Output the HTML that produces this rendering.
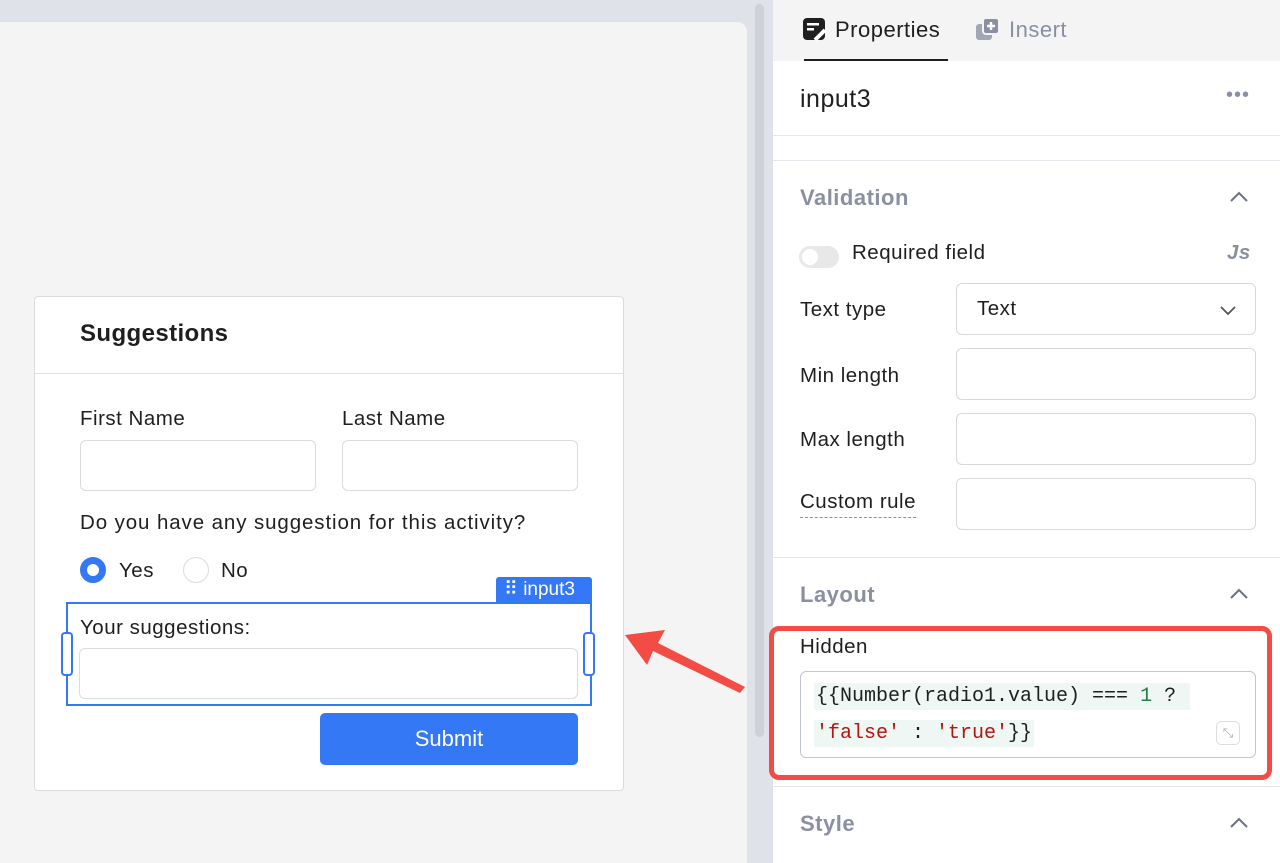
<!DOCTYPE html>
<html><head><meta charset="utf-8"><style>
*{box-sizing:border-box;margin:0;padding:0}
body{width:1280px;height:863px;overflow:hidden;background:#dfe2e9;font-family:"Liberation Sans",sans-serif;color:#1f1f1f;position:relative}
.abs{position:absolute}
.canvas{left:0;top:22px;width:747px;height:841px;background:#f4f4f4;border-top-right-radius:10px}
.thumb{left:755px;top:4px;width:9px;height:733px;background:#ced1d9;border-radius:5px}
.panel{left:773px;top:0;width:507px;height:863px;background:#fff}
.tabs{left:0;top:0;width:507px;height:61px;background:#f4f4f4}
.card{left:34px;top:296px;width:590px;height:495px;background:#fff;border:1px solid #dcdcdc;border-radius:4px}
.inp{background:#fff;border:1px solid #dcdcdc;border-radius:6px;position:absolute}
.t{position:absolute;font-size:20.5px;letter-spacing:0.5px;white-space:nowrap}
.gray{color:#8a8fa3}
.hr{position:absolute;left:0;width:507px;height:1px;background:#e4e6ec}
.pinp{position:absolute;left:183px;width:300px;height:52px;border:1px solid #d8d8d8;border-radius:6px;background:#fff}
.mono{font-family:"Liberation Mono",monospace;font-size:20px;letter-spacing:0}
</style></head><body>
<div class="abs canvas"></div>
<div class="abs thumb"></div>

<div class="abs card">
  <div class="t" style="left:45px;top:23px;font-size:24px;font-weight:bold;letter-spacing:0.4px">Suggestions</div>
  <div class="abs" style="left:0;top:76px;width:588px;height:1px;background:#e0e0e0"></div>
  <div class="t" style="left:45px;top:110px">First Name</div>
  <div class="t" style="left:307px;top:110px">Last Name</div>
  <div class="inp" style="left:45px;top:143px;width:236px;height:51px"></div>
  <div class="inp" style="left:307px;top:143px;width:236px;height:51px"></div>
  <div class="t" style="left:45px;top:214px;letter-spacing:0.9px">Do you have any suggestion for this activity?</div>
  <div class="abs" style="left:45px;top:260px;width:26px;height:26px;border-radius:50%;border:7px solid #3478f6"></div>
  <div class="t" style="left:84px;top:262px">Yes</div>
  <div class="abs" style="left:148px;top:260px;width:26px;height:26px;border-radius:50%;border:1px solid #dcdcdc"></div>
  <div class="t" style="left:186px;top:262px">No</div>
</div>
<!-- selected input3 -->
<div class="abs" style="left:496px;top:577px;width:96px;height:26px;background:#3478f6;border-radius:3px 3px 0 0;color:#fff;font-size:19px;padding:1px 0 0 8px">⠿ input3</div>
<div class="abs" style="left:66px;top:602px;width:526px;height:104px;border:2px solid #3478f6"></div>
<div class="t" style="left:80px;top:616px">Your suggestions:</div>
<div class="inp" style="left:79px;top:648px;width:499px;height:51px"></div>
<div class="abs" style="left:61px;top:632px;width:12px;height:44px;border:2px solid #3478f6;border-radius:4px;background:#fff"></div>
<div class="abs" style="left:583px;top:632px;width:12px;height:44px;border:2px solid #3478f6;border-radius:4px;background:#fff"></div>
<div class="abs" style="left:320px;top:713px;width:258px;height:52px;background:#3478f6;border-radius:5px;color:#fff;font-size:22px;text-align:center;line-height:52px">Submit</div>
<!-- arrow -->
<svg class="abs" style="left:620px;top:625px" width="130" height="70"><polygon points="5,10 45,5 38,18 125,62 120,68 33,26 27,40" fill="#f24c45"/></svg>

<div class="abs panel">
  <div class="abs tabs"></div>
  <svg class="abs" style="left:30px;top:18px" width="24" height="24"><rect x="0" y="0" width="22" height="22" rx="4" fill="#1f1f1f"/><rect x="4" y="5" width="12" height="2.5" fill="#fff"/><rect x="4" y="10" width="7" height="2.5" fill="#fff"/><path d="M12 22 L22 12" stroke="#fff" stroke-width="4"/></svg>
  <div class="t" style="left:62px;top:17px;font-size:22px">Properties</div>
  <div class="abs" style="left:31px;top:59px;width:144px;height:2px;background:#1f1f1f"></div>
  <svg class="abs" style="left:203px;top:18px" width="26" height="24"><rect x="0" y="6" width="16" height="16" rx="3" fill="#a2a6b5"/><rect x="7" y="0" width="16" height="16" rx="3" fill="#8a8fa3" stroke="#f4f4f4" stroke-width="2"/><path d="M15 4v8M11 8h8" stroke="#fff" stroke-width="2.5"/></svg>
  <div class="t gray" style="left:236px;top:17px;font-size:22px">Insert</div>
  <div class="t" style="left:27px;top:85px;font-size:25px">input3</div>
  <div class="t" style="left:453px;top:84px;font-size:20px;color:#8a8fa3;letter-spacing:1px">•••</div>
  <div class="hr" style="top:135px"></div>
  <div class="hr" style="top:160px"></div>
  <div class="t gray" style="left:27px;top:185px;font-size:22px;font-weight:bold">Validation</div>
  <svg class="abs" style="left:456px;top:190px" width="20" height="14"><path d="M2 11L10 3L18 11" stroke="#6c7084" stroke-width="2" fill="none"/></svg>
  <div class="abs" style="left:26px;top:246px;width:40px;height:22px;border-radius:11px;background:#e8e8e8"><div style="margin:3px;width:16px;height:16px;border-radius:50%;background:#fff"></div></div>
  <div class="t" style="left:79px;top:241px">Required field</div>
  <div class="t" style="left:454px;top:241px;font-weight:bold;font-style:italic;color:#8a8fa3">Js</div>
  <div class="t" style="left:27px;top:298px">Text type</div>
  <div class="pinp" style="top:283px"></div>
  <div class="t" style="left:204px;top:297px">Text</div>
  <svg class="abs" style="left:446px;top:304px" width="18" height="12"><path d="M2 3L9 10L16 3" stroke="#555" stroke-width="1.8" fill="none"/></svg>
  <div class="t" style="left:27px;top:364px">Min length</div>
  <div class="pinp" style="top:348px"></div>
  <div class="t" style="left:27px;top:428px">Max length</div>
  <div class="pinp" style="top:413px"></div>
  <div class="t" style="left:27px;top:490px;border-bottom:1px dashed #8a8fa3;padding-bottom:3px">Custom rule</div>
  <div class="pinp" style="top:478px"></div>
  <div class="hr" style="top:557px"></div>
  <div class="t gray" style="left:27px;top:582px;font-size:22px;font-weight:bold">Layout</div>
  <svg class="abs" style="left:456px;top:587px" width="20" height="14"><path d="M2 11L10 3L18 11" stroke="#6c7084" stroke-width="2" fill="none"/></svg>
  <div class="t" style="left:27px;top:635px">Hidden</div>
  <div class="abs" style="left:27px;top:671px;width:456px;height:87px;border:1px solid #c4c6cf;border-radius:6px"></div>
  <div class="abs mono" style="left:41px;top:683px;background:#eef7f3;padding:2px 2px;white-space:pre">{{Number(radio1.value) === <span style="color:#2a7a4b">1</span> ? </div>
  <div class="abs mono" style="left:41px;top:720px;background:#eef7f3;padding:2px 2px;white-space:pre"><span style="color:#b3150f">'false'</span> : <span style="color:#b3150f">'true'</span>}}</div>
  <div class="abs" style="left:443px;top:721px;width:24px;height:24px;border:1px solid #ddd;border-radius:5px;color:#aaa;font-size:13px;text-align:center;line-height:22px">⤡</div>
  <div class="abs" style="left:-4px;top:626px;width:503px;height:154px;border:5px solid #f24c45;border-radius:10px"></div>
  <div class="hr" style="top:786px"></div>
  <div class="t gray" style="left:27px;top:811px;font-size:22px;font-weight:bold">Style</div>
  <svg class="abs" style="left:456px;top:816px" width="20" height="14"><path d="M2 11L10 3L18 11" stroke="#6c7084" stroke-width="2" fill="none"/></svg>
</div>
</body></html>
